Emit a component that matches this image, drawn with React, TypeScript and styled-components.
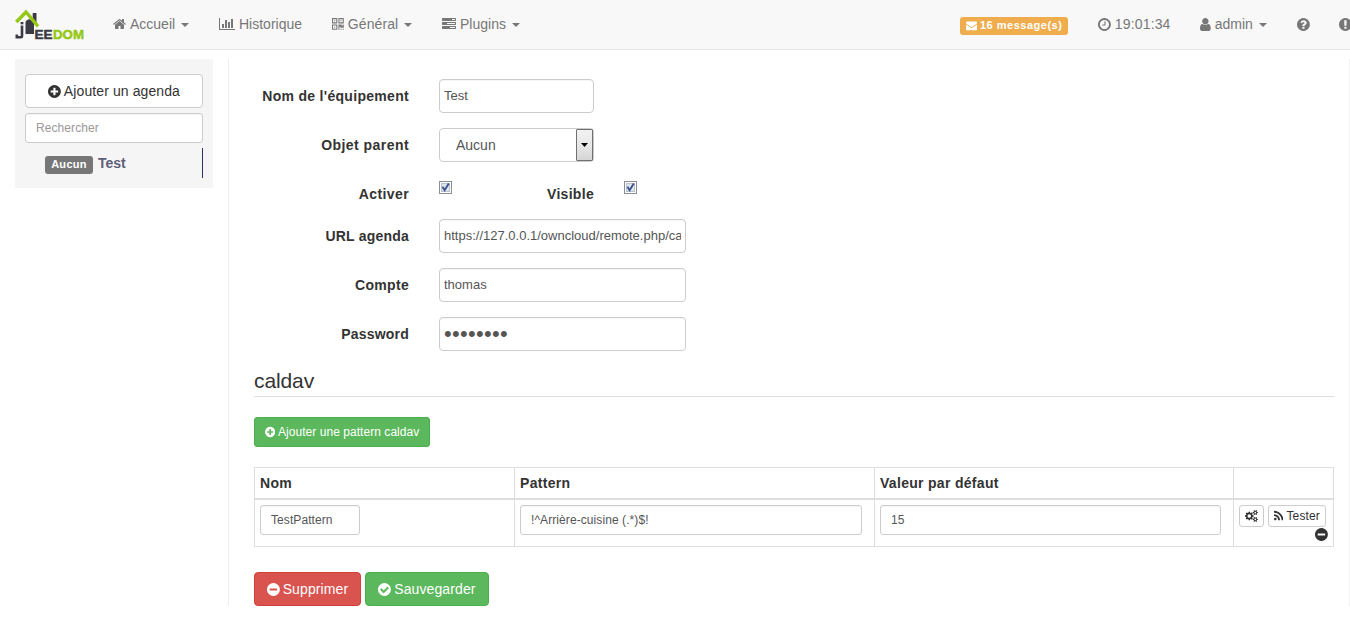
import React from "react";
import styled, { createGlobalStyle } from "styled-components";

const GlobalStyle = createGlobalStyle`
  *, *::before, *::after { box-sizing: border-box; }
  html, body { margin: 0; overflow: hidden; background: #fff; }
  body { font: 14px/20px "Liberation Sans", Arial, sans-serif; color: #333; }
  input, button { font-family: inherit; margin: 0; }
`;

const DISC =
  "M1664 896q0 209-103 385.5t-279.5 279.5-385.5 103-385.5-103-279.5-279.5-103-385.5 103-385.5 279.5-279.5 385.5-103 385.5 103 279.5 279.5 103 385.5z";

const SMALL_GEAR =
  "v140q0 16-149 31-12 27-30 52 51 113 51 138 0 4-4 7-122 71-124 71-8 0-46-47t-52-68q-20 2-30 2t-30-2q-14 21-52 68t-46 47q-2 0-124-71-4-3-4-7 0-25 51-138-18-25-30-52-149-15-149-31v-140q0-16 149-31 13-29 30-52-51-113-51-138 0-4 4-7 4-2 35-20t59-34 30-16q8 0 46 46.5t52 67.5q20-2 30-2t30 2q51-71 92-112l6-2q4 0 124 70 4 3 4 7 0 25-51 138 17 23 30 52 149 15 149 31z";

const ICONS = {
  home: { x: 64, w: 1664, d: "M1472 992v480q0 26-19 45t-45 19h-384v-384h-256v384h-384q-26 0-45-19t-19-45v-480q0-1 .5-3t.5-3l575-474 575 474q1 2 1 6zm223-69l-62 74q-8 9-21 11h-3q-13 0-21-7l-692-577-692 577q-12 8-24 7-13-2-21-11l-62-74q-8-10-7-23.5t11-21.5l719-599q32-26 76-26t76 26l244 204v-195q0-14 9-23t23-9h192q14 0 23 9t9 23v408l219 182q10 8 11 21.5t-7 23.5z" },
  chart: { x: 0, w: 2048, d: "M640 896v512h-256v-512h256zm384-512v1024h-256v-1024h256zm1024 1152v128h-2048v-1536h128v1408h1920zm-640-896v768h-256v-768h256zm384-384v1152h-256v-1152h256z" },
  qrcode: { x: 192, w: 1408, d: "M576 1152v128h-128v-128h128zm0-768v128h-128v-128h128zm768 0v128h-128v-128h128zm-1024 1023h384v-383h-384v383zm0-767h384v-384h-384v384zm768 0h384v-384h-384v384zm-256 256v640h-640v-640h640zm512 512v128h-128v-128h128zm256 0v128h-128v-128h128zm0-512v384h-384v-128h-128v384h-128v-640h384v128h128v-128h128zm-768-768v640h-640v-640h640zm768 0v640h-640v-640h640z" },
  tasks: { x: 0, w: 1792, d: "M1024 1408h640v-128h-640v128zm-384-512h1024v-128h-1024v128zm640-512h384v-128h-384v128zm512 832v256q0 26-19 45t-45 19h-1664q-26 0-45-19t-19-45v-256q0-26 19-45t45-19h1664q26 0 45 19t19 45zm0-512v256q0 26-19 45t-45 19h-1664q-26 0-45-19t-19-45v-256q0-26 19-45t45-19h1664q26 0 45 19t19 45zm0-512v256q0 26-19 45t-45 19h-1664q-26 0-45-19t-19-45v-256q0-26 19-45t45-19h1664q26 0 45 19t19 45z" },
  envelope: { x: 0, w: 1792, d: "M1792 710v794q0 66-47 113t-113 47h-1472q-66 0-113-47t-47-113v-794q44 49 101 87 362 246 497 345 57 42 92.5 65.5t94.5 48 110 24.5h2q51 0 110-24.5t94.5-48 92.5-65.5q170-123 498-345 57-39 100-87zm0-294q0 79-49 151t-122 123q-376 261-468 325-10 7-42.5 31t-54 38.5-52 32.5-57.5 27-50 9h-2q-23 0-50-9t-57.5-27-52-32.5-54-38.5-42.5-31q-91-64-262-182.5t-205-142.5q-62-42-117-115.5t-55-136.5q0-78 41.5-130t118.5-52h1472q65 0 112.5 47t47.5 113z" },
  clock: { x: 128, w: 1536, d: "M1024 544v448q0 14-9 23t-23 9h-320q-14 0-23-9t-9-23v-64q0-14 9-23t23-9h224v-352q0-14 9-23t23-9h64q14 0 23 9t9 23zM1440 896q0-148-73-273t-198-198-273-73-273 73-198 198-73 273 73 273 198 198 273 73 273-73 198-198 73-273z" + DISC },
  user: { x: 256, w: 1280, d: "M1536 1399q0 109-62.5 187t-150.5 78h-854q-88 0-150.5-78t-62.5-187q0-85 8.5-160.5t31.5-152 58.5-131 94-89 134.5-34.5q131 128 313 128t313-128q76 0 134.5 34.5t94 89 58.5 131 31.5 152 8.5 160.5zm-256-887q0 159-112.5 271.5t-271.5 112.5-271.5-112.5-112.5-271.5 112.5-271.5 271.5-112.5 271.5 112.5 112.5 271.5z" },
  question: { x: 128, w: 1536, d: "M1024 1376v-192q0-14-9-23t-23-9h-192q-14 0-23 9t-9 23v192q0 14 9 23t23 9h192q14 0 23-9t9-23zm256-672q0-88-55.5-163t-138.5-116-170-41q-243 0-371 213-15 24 8 42l132 100q7 6 19 6 16 0 25-12 53-68 86-92 34-24 86-24 48 0 85.5 26t37.5 59q0 38-20 61t-68 45q-63 28-115.5 86.5t-52.5 125.5v36q0 14 9 23t23 9h192q14 0 23-9t9-23q0-19 21.5-49.5t54.5-49.5q32-18 49-28.5t46-35 44.5-48 28-60.5 12.5-81z" + DISC },
  exclamation: { x: 128, w: 1536, d: "M1024 1375v-190q0-14-9.5-23.5t-22.5-9.5h-192q-13 0-22.5 9.5t-9.5 23.5v190q0 14 9.5 23.5t22.5 9.5h192q13 0 22.5-9.5t9.5-23.5zm-2-344l18-621q0-12-10-18-10-8-24-8h-220q-14 0-24 8-10 6-10 18l17 621q0 10 10 17.5t24 7.5h185q14 0 23.5-7.5t10.5-17.5z" + DISC },
  plus: { x: 128, w: 1536, d: "M1344 960v-128q0-26-19-45t-45-19h-256v-256q0-26-19-45t-45-19h-128q-26 0-45 19t-19 45v256h-256q-26 0-45 19t-19 45v128q0 26 19 45t45 19h256v256q0 26 19 45t45 19h128q26 0 45-19t19-45v-256h256q26 0 45-19t19-45z" + DISC },
  minus: { x: 128, w: 1536, d: "M1344 960v-128q0-26-19-45t-45-19h-768q-26 0-45 19t-19 45v128q0 26 19 45t45 19h768q26 0 45-19t19-45z" + DISC },
  check: { x: 128, w: 1536, d: "M1412 734q0-28-18-46l-91-90q-19-19-45-19t-45 19l-408 407-226-226q-19-19-45-19t-45 19l-91 90q-18 18-18 46 0 27 18 45l362 362q19 19 45 19 27 0 46-19l543-543q18-18 18-45z" + DISC },
  rss: { x: 192, w: 1408, d: "M576 1344q0 80-56 136t-136 56-136-56-56-136 56-136 136-56 136 56 56 136zm512 123q2 28-17 48-18 21-47 21h-135q-25 0-43-16.5t-20-41.5q-22-229-184.5-391.5t-391.5-184.5q-25-2-41.5-20t-16.500-43v-135q0-29 21-47 17-17 43-17h5q160 13 306 80.500t259 181.500q114 113 181.500 259t80.500 306zm512 2q2 27-18 47-18 20-46 20h-143q-26 0-44.500-17.500t-19.500-42.500q-12-215-101-408.500t-231.500-336-336-231.500-408.500-102q-25-1-42.500-19.500t-17.500-43.500v-143q0-28 20-46 18-18 44-18h3q262 13 501.500 120t425.500 294q187 186 294 425.500t120 501.500z" },
  gears: { x: 0, w: 1920, d: "M896 896q0-106-75-181t-181-75-181 75-75 181 75 181 181 75 181-75 75-181zm768 512q0-52-38-90t-90-38-90 38-38 90q0 53 37.5 90.5t90.5 37.5 90.5-37.5 37.5-90.5zm0-1024q0-52-38-90t-90-38-90 38-38 90q0 53 37.5 90.5t90.5 37.5 90.5-37.5 37.5-90.5zm-384 421v185q0 10-7 19.5t-16 10.5l-155 24q-11 35-32 76 34 48 90 115 7 11 7 20 0 12-7 19-23 30-82.5 89.5t-78.5 59.5q-11 0-21-7l-115-90q-37 19-77 31-11 108-23 155-7 24-30 24h-186q-11 0-20-7.5t-10-17.5l-23-153q-34-10-75-31l-118 89q-7 7-20 7-11 0-21-8-144-133-144-160 0-9 7-19 10-14 41-53t47-61q-23-44-35-82l-152-24q-10-1-17-9.5t-7-19.5v-185q0-10 7-19.5t16-10.5l155-24q11-35 32-76-34-48-90-115-7-11-7-20 0-12 7-20 22-30 82-89t79-59q11 0 21 7l115 90q34-18 77-32 11-108 23-154 7-24 30-24h186q11 0 20 7.5t10 17.5l23 153q34 10 75 31l118-89q8-7 20-7 11 0 21 8 144 133 144 160 0 8-7 19-12 16-42 54t-45 60q23 48 34 82l152 23q10 2 17 10.5t7 19.5zM1920 1338" + SMALL_GEAR + "M1920 314" + SMALL_GEAR },
};

type IconName = keyof typeof ICONS;

const IconSvg = styled.svg`
  flex: none;
  display: block;
`;

function Icon({ name, size = 14 }: { name: IconName; size?: number }) {
  const { x, w, d } = ICONS[name];
  return (
    <IconSvg width={(w / 1792) * size} height={size} viewBox={`${x} 0 ${w} 1792`} fill="currentColor" fillRule="evenodd" aria-hidden>
      <path d={d} />
    </IconSvg>
  );
}

const Navbar = styled.nav`
  display: flex;
  height: 50px;
  width: 1367px;
  background: #f8f8f8;
  border-bottom: 1px solid #e7e7e7;
  color: #777;
`;

const Brand = styled.a`
  width: 98px;
  padding: 9px 0 0 14px;
`;

const NavItem = styled.a<{ $w: number; $ls?: number }>`
  display: flex;
  align-items: center;
  gap: 4px;
  width: ${(p) => p.$w}px;
  height: 48px;
  padding-left: 15px;
  letter-spacing: ${(p) => p.$ls ?? 0}px;
  white-space: nowrap;
`;

const Spacer = styled.div`
  flex: 1;
`;

const Caret = styled.i`
  margin: 2px 0 0 2px;
  border: 4px solid transparent;
  border-top-color: currentColor;
  border-bottom: 0;
`;

const MessageBadge = styled.span`
  display: flex;
  align-items: center;
  gap: 3px;
  width: 108px;
  height: 18px;
  margin-top: 3px;
  padding-left: 6px;
  border-radius: 3px;
  background: #f0ad4e;
  color: #fff;
  font-size: 11px;
  line-height: 17px;
  font-weight: bold;
  letter-spacing: 0.5px;
`;

const Page = styled.div`
  display: flex;
  align-items: flex-start;
  padding: 9px 0 0 15px;
`;

const Sidebar = styled.aside`
  width: 198px;
  height: 129px;
  padding: 15px 10px 0;
  background: #f5f5f5;
`;

type Tone = "plain" | "success" | "danger";
const tones: Record<Tone, [string, string, string]> = {
  plain: ["#fff", "#ccc", "#333"],
  success: ["#5cb85c", "#4cae4c", "#fff"],
  danger: ["#d9534f", "#d43f3a", "#fff"],
};

const Button = styled.button<{ $tone?: Tone; $w: number; $h?: number; $fs?: number; $ls?: number }>`
  display: flex;
  align-items: center;
  justify-content: center;
  gap: 3px;
  flex: none;
  width: ${(p) => p.$w}px;
  height: ${(p) => p.$h ?? 34}px;
  padding: 0;
  border: 1px solid ${(p) => tones[p.$tone ?? "plain"][1]};
  border-radius: ${(p) => ((p.$h ?? 34) > 30 ? 4 : 3)}px;
  background: ${(p) => tones[p.$tone ?? "plain"][0]};
  color: ${(p) => tones[p.$tone ?? "plain"][2]};
  font-size: ${(p) => p.$fs ?? 14}px;
  letter-spacing: ${(p) => p.$ls ?? 0}px;
  white-space: nowrap;
`;

const Input = styled.input<{ $w: number; $small?: boolean }>`
  display: block;
  width: ${(p) => p.$w}px;
  height: ${(p) => (p.$small ? 30 : 34)}px;
  padding: ${(p) => (p.$small ? "0 10px" : "0 4px 1px")};
  border: 1px solid #ccc;
  border-radius: ${(p) => (p.$small ? 3 : 4)}px;
  background: #fff;
  box-shadow: inset 0 1px 1px rgba(0, 0, 0, 0.04);
  color: #555;
  font-size: ${(p) => (p.$small ? 12 : 13)}px;
  letter-spacing: ${(p) => (p.$small ? 0.08 : 0)}px;
  outline: 0;
  &::placeholder { color: #999; opacity: 1; }
`;

const PasswordInput = styled(Input)`
  padding-bottom: 0;
  font-size: 22px;
  letter-spacing: 0.3px;
`;

const SearchBox = styled.div`
  margin: 5px 0;
`;

const EquipmentItem = styled.a`
  display: flex;
  align-items: center;
  gap: 5px;
  height: 30px;
  padding-left: 20px;
  border-right: 1px solid #2b3060;
  color: #5e5e78;
  font-weight: bold;
`;

const ObjectLabel = styled.span`
  width: 48px;
  height: 18px;
  margin-top: 3px;
  border-radius: 3px;
  background: #777;
  color: #fff;
  font-size: 11px;
  line-height: 17px;
  letter-spacing: 0.3px;
  text-align: center;
`;

const Main = styled.main`
  width: 1122px;
  height: 547px;
  margin-left: 15px;
  padding: 20px 15px 0 25px;
  border-left: 1px solid #eee;
  border-right: 1px solid #f2f2f2;
`;

const FormRow = styled.div<{ $h?: number }>`
  display: flex;
  height: ${(p) => p.$h ?? 34}px;
  margin-bottom: 15px;
`;

const Label = styled.label<{ $w: number; $ls?: number }>`
  width: ${(p) => p.$w}px;
  padding-top: 7px;
  margin-right: 30px;
  font-weight: bold;
  letter-spacing: ${(p) => p.$ls ?? 0.3}px;
  text-align: right;
  white-space: nowrap;
`;

const Select = styled.div`
  display: flex;
  justify-content: space-between;
  width: 155px;
  height: 34px;
  padding-left: 16px;
  border: 1px solid #ccc;
  border-radius: 4px;
  color: #555;
  line-height: 32px;
`;

const SelectArrow = styled.span`
  display: flex;
  align-items: center;
  justify-content: center;
  width: 17px;
  height: 32px;
  border: 1px solid #707070;
  border-radius: 1px;
  background: linear-gradient(#f2f2f2, #e8e8e8 50%, #d5d5d5);
  color: #000;
`;

const CheckSvg = styled.svg`
  margin-top: 4px;
`;

function CheckBox() {
  return (
    <CheckSvg width="13" height="13" viewBox="0 0 13 13">
      <rect x=".5" y=".5" width="12" height="12" fill="#fff" stroke="#8a8f94" />
      <rect x="2.500" y="2.500" width="8" height="8" fill="#dfe5ec" stroke="#b8c2cf" />
      <path d="M3.500 5.800L5.600 9.300 9.800 2.600" fill="none" stroke="#3c5590" strokeWidth="1.900" />
    </CheckSvg>
  );
}

const Legend = styled.h2`
  width: 1080px;
  height: 31px;
  margin: 0 0 20px;
  border-bottom: 1px solid #ddd;
  font-size: 21px;
  font-weight: normal;
  line-height: 30px;
  letter-spacing: -0.1px;
`;

const Table = styled.div`
  width: 1080px;
  height: 80px;
  margin: 20px 0 25px;
  border: 1px solid #ddd;
`;

const TableRow = styled.div<{ $head?: boolean }>`
  display: grid;
  grid-template-columns: 260px 360px 359px 99px;
  height: ${(p) => (p.$head ? 32 : 46)}px;
  border-bottom: ${(p) => (p.$head ? "2px solid #ddd" : "0")};
  font-weight: ${(p) => (p.$head ? "bold" : "normal")};
  letter-spacing: ${(p) => (p.$head ? "0.3px" : "0")};
`;

const Cell = styled.div`
  padding: 5px;
  border-right: 1px solid #ddd;
  &:last-child { border-right: 0; }
`;

const Actions = styled.div`
  display: flex;
  gap: 4px;
`;

const RemoveAction = styled.div`
  display: flex;
  justify-content: flex-end;
`;

function Logo() {
  return (
    <svg width="72" height="32" viewBox="0 0 72 32">
      <path d="M18.700 4h3.800v11h-3.800z" fill="#3b3b45" />
      <path d="M11.500 13Q13 9.500 16.500 10.500L20 14v11h-8.500z" fill="#3b3b45" />
      <path d="M2.300 13L12 3 24 17.300" fill="none" stroke="#95c814" strokeWidth="3.400" />
      <path d="M8 16.500v10.700q0 1-1 1H2.800V25.500" fill="none" stroke="#3b3b45" strokeWidth="2.600" />
      <path d="M6.600 13h2.800v2.300H6.600z" fill="#3b3b45" />
      <g fontFamily="Liberation Sans, Arial, sans-serif" fontWeight="bold" fontSize="13.500" strokeWidth=".5">
        <text x="20.500" y="29.700" textLength="18" fill="#3b3b45" stroke="#3b3b45">EE</text>
        <text x="39" y="29.700" textLength="31" lengthAdjust="spacingAndGlyphs" fill="#95c814" stroke="#95c814">DOM</text>
      </g>
    </svg>
  );
}

export default function App() {
  return (
    <>
      <GlobalStyle />
      <Navbar>
        <Brand><Logo /></Brand>
        <NavItem $w={106}><Icon name="home" />Accueil <Caret /></NavItem>
        <NavItem $w={113}><Icon name="chart" />Historique</NavItem>
        <NavItem $w={110} $ls={0.1}><Icon name="qrcode" size={15} />Général <Caret /></NavItem>
        <NavItem $w={110}><Icon name="tasks" />Plugins <Caret /></NavItem>
        <Spacer />
        <NavItem $w={138}><MessageBadge><Icon name="envelope" size={11} />16 message(s)</MessageBadge></NavItem>
        <NavItem $w={102} $ls={0.15}><Icon name="clock" size={15} />19:01:34</NavItem>
        <NavItem $w={97}><Icon name="user" size={15} />admin <Caret /></NavItem>
        <NavItem $w={42}><Icon name="question" size={15} /></NavItem>
        <NavItem $w={43}><Icon name="exclamation" size={15} /></NavItem>
      </Navbar>
      <Page>
        <Sidebar>
          <Button $w={178} $ls={0.1}><Icon name="plus" size={15} />Ajouter un agenda</Button>
          <SearchBox><Input $small $w={178} placeholder="Rechercher" /></SearchBox>
          <EquipmentItem><ObjectLabel>Aucun</ObjectLabel>Test</EquipmentItem>
        </Sidebar>
        <Main>
          <FormRow><Label $w={155}>Nom de l'équipement</Label><Input $w={155} defaultValue="Test" /></FormRow>
          <FormRow>
            <Label $w={155} $ls={0.45}>Objet parent</Label>
            <Select>Aucun<SelectArrow><svg width="7" height="4" viewBox="0 0 7 4"><path d="M0 0h7L3.500 4z" /></svg></SelectArrow></Select>
          </FormRow>
          <FormRow $h={27}>
            <Label $w={155} $ls={0.4}>Activer</Label><CheckBox />
            <Label $w={142}>Visible</Label><CheckBox />
          </FormRow>
          <FormRow><Label $w={155} $ls={0.22}>URL agenda</Label><Input $w={247} defaultValue="https://127.0.0.1/owncloud/remote.php/caldav" /></FormRow>
          <FormRow><Label $w={155}>Compte</Label><Input $w={247} defaultValue="thomas" /></FormRow>
          <FormRow><Label $w={155} $ls={0.2}>Password</Label><PasswordInput $w={247} type="password" defaultValue="password" /></FormRow>
          <Legend>caldav</Legend>
          <Button $tone="success" $w={176} $h={30} $fs={12} $ls={0.05}><Icon name="plus" size={12} />Ajouter une pattern caldav</Button>
          <Table>
            <TableRow $head><Cell>Nom</Cell><Cell>Pattern</Cell><Cell>Valeur par défaut</Cell><Cell /></TableRow>
            <TableRow>
              <Cell><Input $small $w={100} defaultValue="TestPattern" /></Cell>
              <Cell><Input $small $w={342} defaultValue="!^Arrière-cuisine (.*)$!" /></Cell>
              <Cell><Input $small $w={341} defaultValue="15" /></Cell>
              <Cell>
                <Actions>
                  <Button $w={25} $h={22} $fs={12}><Icon name="gears" size={12} /></Button>
                  <Button $w={58} $h={22} $fs={12} $ls={0.15}><Icon name="rss" size={12} />Tester</Button>
                </Actions>
                <RemoveAction><Icon name="minus" size={15} /></RemoveAction>
              </Cell>
            </TableRow>
          </Table>
          <Actions>
            <Button $tone="danger" $w={107} $ls={0.1}><Icon name="minus" size={15} />Supprimer</Button>
            <Button $tone="success" $w={124} $ls={0.1}><Icon name="check" size={15} />Sauvegarder</Button>
          </Actions>
        </Main>
      </Page>
    </>
  );
}
